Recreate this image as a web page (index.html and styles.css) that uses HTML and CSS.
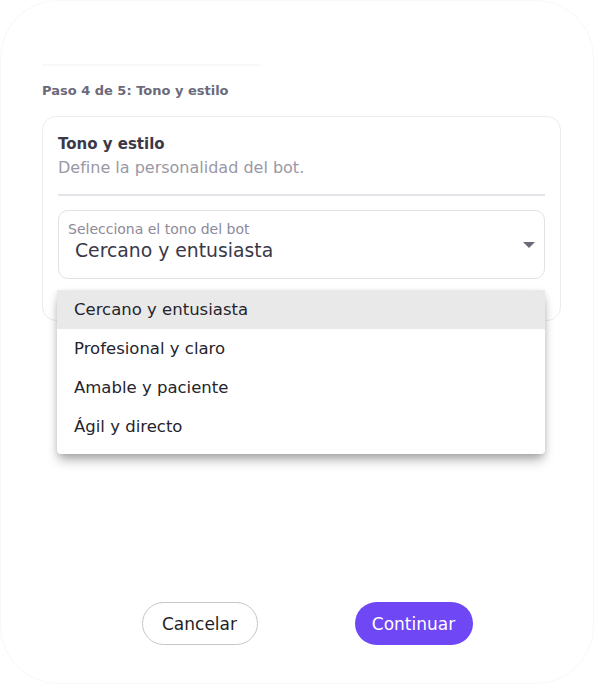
FILE: index.html
```html
<!DOCTYPE html>
<html lang="es">
<head>
<meta charset="utf-8">
<link rel="stylesheet" href="styles.css">
</head>
<body>
<div class="dialog">
  <div class="progress"></div>
  <div class="step">Paso 4 de 5: Tono y estilo</div>
  <section class="card">
    <h2 class="title">Tono y estilo</h2>
    <p class="subtitle">Define la personalidad del bot.</p>
    <hr class="divider">
    <div class="select">
      <span class="select-label">Selecciona el tono del bot</span>
      <span class="select-value">Cercano y entusiasta</span>
      <svg class="caret" width="12" height="6" viewBox="0 0 12 6"><path d="M0 0h12L6 6z" fill="#6b6a78"/></svg>
      <ul class="menu">
        <li class="item active">Cercano y entusiasta</li>
        <li class="item">Profesional y claro</li>
        <li class="item">Amable y paciente</li>
        <li class="item">Ágil y directo</li>
      </ul>
    </div>
  </section>
  <div class="actions">
    <button class="btn btn-ghost">Cancelar</button>
    <button class="btn btn-primary">Continuar</button>
  </div>
</div>
</body>
</html>
```
FILE: styles.css
```css
* { box-sizing: border-box; }
html, body { margin: 0; padding: 0; background: #fff; }
body { font-family: "DejaVu Sans", "Open Sans", sans-serif; }
.dialog {
  width: 594px;
  height: 684px;
  border: 1px solid #f8f8f8;
  border-radius: 58px;
  padding: 0 32px 0 41px;
  display: flex;
  flex-direction: column;
}
.progress {
  margin-top: 63px;
  width: 218px;
  height: 2px;
  background: #f8f8f8;
}
.step {
  margin-top: 14px;
  font-size: 13px;
  font-weight: 600;
  color: #6b6a7a;
  line-height: 22px;
}
.card {
  margin-top: 14px;
  border: 1px solid #ececef;
  border-radius: 14px;
  padding: 16px 15px 41px 15px;
}
.title {
  margin: 0;
  font-size: 15px;
  font-weight: 600;
  color: #3b3948;
  line-height: 22px;
}
.subtitle {
  margin: 2px 0 0;
  font-size: 16px;
  color: #9a98a6;
  line-height: 22px;
}
.divider {
  margin: 15px 0 14px;
  border: 0;
  border-top: 2px solid #e4e4e8;
}
.select {
  position: relative;
  height: 69px;
  border: 1px solid #e2e2e6;
  border-radius: 10px;
  padding: 9px 16px 0 9px;
  display: flex;
  flex-direction: column;
}
.select-label {
  font-size: 14px;
  color: #8c8a98;
  line-height: 18px;
}
.select-value {
  margin-left: 7px;
  font-size: 18.8px;
  color: #3a3848;
  line-height: 26px;
}
.caret {
  position: absolute;
  right: 9px;
  top: 31px;
}
.menu {
  position: absolute;
  left: -2px;
  right: -1px;
  top: 79px;
  margin: 0;
  padding: 0 0 8px;
  list-style: none;
  background: #fff;
  border-radius: 4px;
  box-shadow: 0 8px 12px -2px rgba(0,0,0,0.3), 0 2px 6px rgba(0,0,0,0.12);
}
.item {
  height: 39px;
  padding-left: 17px;
  display: flex;
  align-items: center;
  font-size: 16.5px;
  color: #25242c;
}
.item.active { background: #e9e9e9; }
.actions {
  margin-top: auto;
  margin-bottom: 38px;
  display: flex;
  justify-content: center;
  gap: 97px;
  padding-left: 11px;
}
.btn {
  height: 43px;
  border-radius: 22px;
  font-family: inherit;
  font-size: 17px;
  padding: 0;
  cursor: pointer;
}
.btn-ghost {
  background: #fff;
  border: 1px solid #c6c6c6;
  color: #1f1e25;
  width: 116px;
}
.btn-primary {
  background: #7047f5;
  border: 0;
  color: #fff;
  width: 118px;
}
```
